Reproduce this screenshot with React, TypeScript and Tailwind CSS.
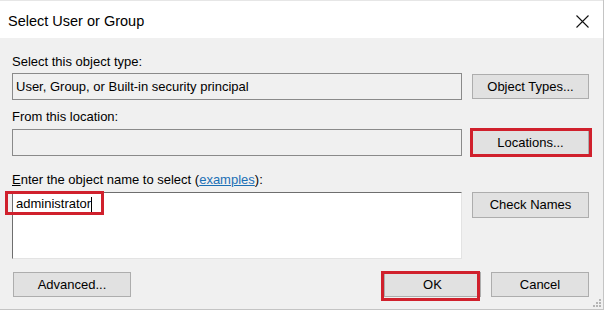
import React from 'react';

const font = { fontFamily: '"Liberation Sans", Arial, sans-serif' };

function Btn({ label, className = '' }: { label: React.ReactNode; className?: string }) {
  return (
    <div
      className={`h-[25px] flex items-center justify-center bg-[#e1e1e1] border border-[#adadad] text-[13px] text-black ${className}`}
    >
      {label}
    </div>
  );
}

// red annotation rectangle drawn over the dialog
function Mark({ className }: { className: string }) {
  return <div className={`absolute border-[3px] border-[#d0202c] pointer-events-none ${className}`} />;
}

export default function App() {
  return (
    <div className="w-[607px] h-[312px] bg-white overflow-hidden" style={font}>
      <div className="relative w-[604px] h-[310px] flex flex-col bg-[#f0f0f0] border-r border-b border-[#c4c4c4]">
        {/* Title bar */}
        <div className="h-[38px] shrink-0 bg-white border-t border-[#e6e6e6] flex items-center justify-between pl-[8px] pr-[14px] pt-[4px]">
          <span className="text-[14.5px] text-black">Select User or Group</span>
          <svg width="13" height="13" viewBox="0 0 13 13">
            <path d="M0.5 0.5L12.5 12.5M12.5 0.5L0.5 12.5" stroke="#111" strokeWidth="1.1" />
          </svg>
        </div>

        {/* Body */}
        <div className="flex flex-col pl-3 pr-[14px] pt-4 text-[13px] text-black">
          <div className="h-4 leading-4">Select this object type:</div>
          <div className="mt-[3px] flex items-center gap-[10px]">
            <div className="w-[450px] h-[27px] border border-[#8a8a8a] bg-[#f0f0f0] flex items-center pl-[3px]">
              User, Group, or Built-in security principal
            </div>
            <Btn label="Object Types..." className="w-[117px]" />
          </div>

          <div className="mt-[9px] h-4 leading-4">From this location:</div>
          <div className="mt-[4px] flex items-center gap-[10px]">
            <div className="w-[450px] h-[27px] border border-[#8a8a8a] bg-[#f0f0f0]" />
            <div className="relative">
              <Btn label="Locations..." className="w-[117px]" />
              <Mark className="-left-[2px] -right-[3px] -top-[2px] -bottom-[2px]" />
            </div>
          </div>

          <div className="mt-4 h-4 leading-4">
            <span className="underline">E</span>nter the object name to select (
            <span className="text-[#1b6fb5] underline">examples</span>):
          </div>
          <div className="mt-[4px] flex items-start gap-[10px]">
            <div className="relative w-[450px] h-[67px] bg-white border-t border-l border-[#6e6e6e] border-r border-b border-r-[#e3e3e3] border-b-[#e3e3e3]">
              <div className="pl-[3px] pt-[2px] h-[20px] flex items-center">
                administrator<span className="inline-block w-px h-[15px] bg-black" />
              </div>
              <Mark className="-left-[8px] -top-[2px] w-[99px] h-[24px]" />
            </div>
            <Btn label="Check Names" className="w-[117px] h-[26px]" />
          </div>

          <div className="mt-[13px] flex items-center">
            <Btn label="Advanced..." className="w-[118px] ml-px" />
            <div className="ml-auto relative">
              <Btn label="OK" className="w-[97px]" />
              <Mark className="-left-[3px] -top-[1px] w-[99px] h-[30px]" />
            </div>
            <Btn label="Cancel" className="w-[98px] ml-[10px]" />
          </div>
        </div>

        {/* size grip */}
        <svg width="10" height="10" viewBox="0 0 10 10" className="absolute right-[1px] bottom-[1px]">
          <g fill="#b5b5b5">
            <rect x="7" y="1" width="2" height="2" />
            <rect x="4" y="4" width="2" height="2" />
            <rect x="7" y="4" width="2" height="2" />
            <rect x="1" y="7" width="2" height="2" />
            <rect x="4" y="7" width="2" height="2" />
            <rect x="7" y="7" width="2" height="2" />
          </g>
        </svg>
      </div>
    </div>
  );
}
